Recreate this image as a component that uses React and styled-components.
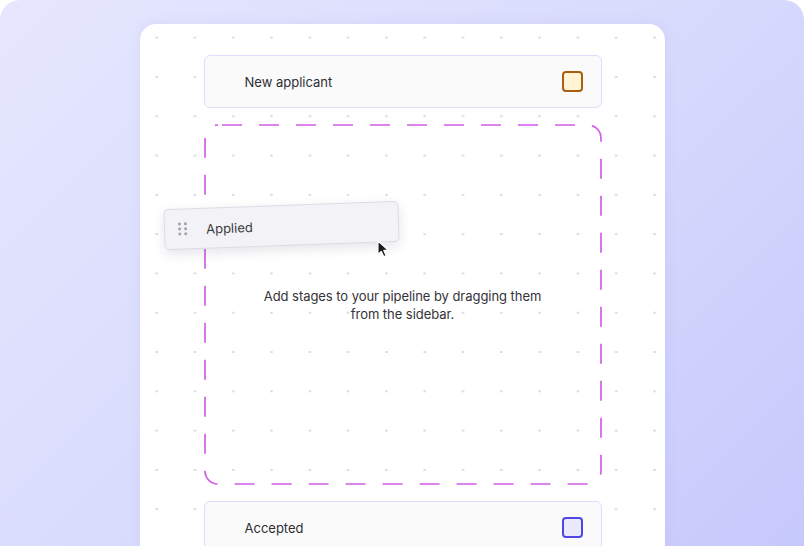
import React from "react";
import styled, { createGlobalStyle } from "styled-components";

const GlobalStyle = createGlobalStyle`
  html, body {
    margin: 0;
    padding: 0;
    background: #fff;
    font-family: Inter, "Noto Sans", sans-serif;
  }
`;

const Backdrop = styled.div`
  width: 804px;
  height: 546px;
  overflow: hidden;
  border-radius: 20px 20px 0 0;
  background: linear-gradient(135deg, #e6e7fd 0%, #d9dbfd 50%, #c6c9fb 100%);
  display: flex;
  justify-content: center;
  padding-top: 24px;
  box-sizing: border-box;
`;

const Board = styled.div`
  width: 525px;
  height: 560px;
  flex-shrink: 0;
  box-sizing: border-box;
  border-radius: 16px 16px 0 0;
  background-color: #fff;
  background-image: radial-gradient(circle, #d8d8dd 1px, transparent 1.3px);
  background-size: 38.3px 39.3px;
  background-position: -2.5px -6px;
  box-shadow: 0 0 12px rgba(120, 120, 200, 0.12);
  padding: 31px 63px 0 64px;
  display: flex;
  flex-direction: column;
  gap: 16px;
`;

const StageCard = styled.div`
  height: 53px;
  box-sizing: border-box;
  border: 1px solid #e0ddfb;
  border-radius: 6px;
  background: #fafafa;
  display: flex;
  align-items: center;
  justify-content: space-between;
  padding: 0 18px 0 40px;
  font-size: 13px;
  color: #2f2f33;
  flex-shrink: 0;
`;

const Check = styled.span`
  width: 21px;
  height: 21px;
  box-sizing: border-box;
  border-radius: 4px;
  border: 2px solid ${(p) => p.$border};
  background: ${(p) => p.$fill};
`;

const DropZone = styled.div`
  position: relative;
  height: 361px;
  flex-shrink: 0;
  display: flex;
  align-items: center;
  justify-content: center;
`;

const DashFrame = styled.svg`
  position: absolute;
  inset: 0;
  pointer-events: none;
`;

const Hint = styled.p`
  margin: 0;
  width: 290px;
  text-align: center;
  font-size: 13px;
  letter-spacing: -0.05px;
  line-height: 18px;
  color: #333338;
`;

const DraggedCard = styled.div`
  position: absolute;
  left: -40px;
  top: 81px;
  width: 235px;
  height: 41px;
  box-sizing: border-box;
  transform: rotate(-2deg);
  border: 1px solid #dddce4;
  border-radius: 5px;
  background: #f3f2f7;
  box-shadow: 0 4px 12px rgba(40, 40, 80, 0.12);
  display: flex;
  align-items: center;
  gap: 19px;
  padding-left: 13px;
  font-size: 13px;
  color: #3a3a40;
`;

const Handle = styled.span`
  display: grid;
  grid-template-columns: repeat(2, 3px);
  gap: 2px 3px;

  i {
    width: 3px;
    height: 3px;
    border-radius: 50%;
    background: #a4a4ac;
  }
`;

const Cursor = styled.svg`
  position: absolute;
  left: 172px;
  top: 115px;
`;

export default function App() {
  return (
    <>
      <GlobalStyle />
      <Backdrop>
        <Board>
          <StageCard>
            New applicant
            <Check $border="#a6600f" $fill="#fff4d6" />
          </StageCard>
          <DropZone>
            <DashFrame width="398" height="361">
              <rect
                x="1"
                y="1"
                width="396"
                height="359"
                rx="13"
                fill="none"
                stroke="#d35ee8"
                strokeWidth="1.7"
                strokeDasharray="20 17"
                strokeDashoffset="-4"
              />
            </DashFrame>
            <Hint>Add stages to your pipeline by dragging them from the sidebar.</Hint>
            <DraggedCard>
              <Handle>
                {[0, 1, 2, 3, 4, 5].map((i) => (
                  <i key={i} />
                ))}
              </Handle>
              Applied
            </DraggedCard>
            <Cursor width="16" height="20" viewBox="0 0 14 18">
              <path
                d="M1.5 1.5 L1.5 14 L4.6 11.2 L6.8 16 L9 15 L6.9 10.3 L11.2 10.3 Z"
                fill="#1b1b1f"
                stroke="#fff"
                strokeWidth="1.2"
                strokeLinejoin="round"
              />
            </Cursor>
          </DropZone>
          <StageCard>
            Accepted
            <Check $border="#4f46e5" $fill="#ebeafd" />
          </StageCard>
        </Board>
      </Backdrop>
    </>
  );
}
